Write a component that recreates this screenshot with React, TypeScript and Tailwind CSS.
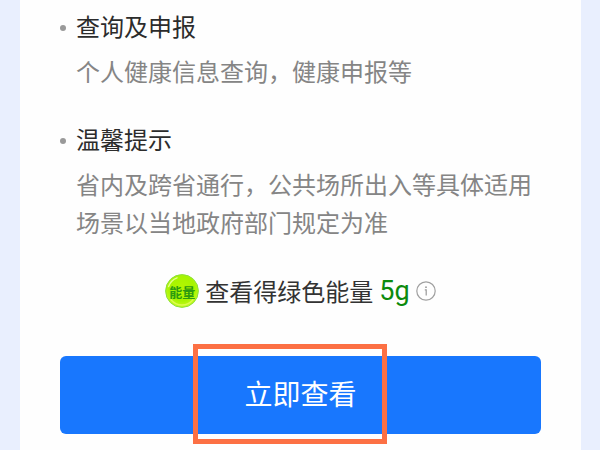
const sections = [
  {
    title: "查询及申报",
    body: "个人健康信息查询，健康申报等",
  },
  {
    title: "温馨提示",
    body: "省内及跨省通行，公共场所出入等具体适用场景以当地政府部门规定为准",
  },
];

const EnergyBadge = () => (
  <span className="relative flex h-[34px] w-[34px] shrink-0 items-center justify-center">
    <svg viewBox="0 0 34 34" className="absolute inset-0 h-full w-full" aria-hidden="true">
      <defs>
        <radialGradient id="energy" cx="0.5" cy="0.42" r="0.58">
          <stop offset="0" stopColor="#b4f700" />
          <stop offset="0.65" stopColor="#a6f400" />
          <stop offset="1" stopColor="#c8fa20" />
        </radialGradient>
      </defs>
      <circle cx="17" cy="17" r="16.4" fill="url(#energy)" stroke="#8ae03c" strokeWidth="1" />
      <path d="M3.6 12.5A14.2 14.2 0 0 1 12 3.8" fill="none" stroke="#e4ff90" strokeWidth="1.4" strokeLinecap="round" />
      <path d="M6 25.8a14.2 14.2 0 0 0 22 0" fill="none" stroke="#dcfb50" strokeWidth="1.4" strokeLinecap="round" />
    </svg>
    <span className="relative text-[13px] font-bold leading-none text-[#2c9a10]">能量</span>
  </span>
);

const InfoIcon = () => (
  <svg viewBox="0 0 20 20" className="h-5 w-5" aria-hidden="true">
    <circle cx="10" cy="10" r="9.2" fill="none" stroke="#a0a0a0" strokeWidth="1.2" />
    <circle cx="10" cy="6.2" r="0.9" fill="#999" />
    <path d="M8.8 8.8H10.2V14.4" fill="none" stroke="#999" strokeWidth="1.2" />
  </svg>
);

export default function App() {
  return (
    <div className="min-h-screen bg-[#e9effe] pl-5 pr-[19px] font-['Noto_Sans_CJK_SC',sans-serif]">
      <main className="min-h-screen bg-[#fefefe] px-10 pb-4 pt-[7px]">
        <ul className="flex flex-col gap-[30px]">
          {sections.map((section) => (
            <li key={section.title} className="flex gap-[10px]">
              <span className="mt-[18px] h-[6px] w-[6px] shrink-0 rounded-full bg-[#999]" />
              <div>
                <h2 className="text-2xl leading-[38px] text-[#2c2c2c]">{section.title}</h2>
                <p className="mt-[7px] text-2xl leading-[38px] text-[#858585]">{section.body}</p>
              </div>
            </li>
          ))}
        </ul>

        <div className="mt-[33px] flex items-center justify-center">
          <EnergyBadge />
          <p className="ml-[6px] text-2xl leading-[34px] text-[#333]">
            查看得绿色能量
          </p>
          <span className="ml-[6px] font-[Roboto,sans-serif] text-[27px] leading-[34px] text-[#0c8a0c]">5g</span>
          <button type="button" aria-label="说明" className="ml-[6px]">
            <InfoIcon />
          </button>
        </div>

        <div className="relative mt-12">
          <button
            type="button"
            className="h-[78px] w-full rounded-md bg-[#1877fe] pb-[5px] text-[28px] leading-10 text-white"
          >
            立即查看
          </button>
          <div className="pointer-events-none absolute -top-3 left-[133px] h-[100px] w-[194px] border-5 border-[#fc7044]" />
        </div>
      </main>
    </div>
  );
}
